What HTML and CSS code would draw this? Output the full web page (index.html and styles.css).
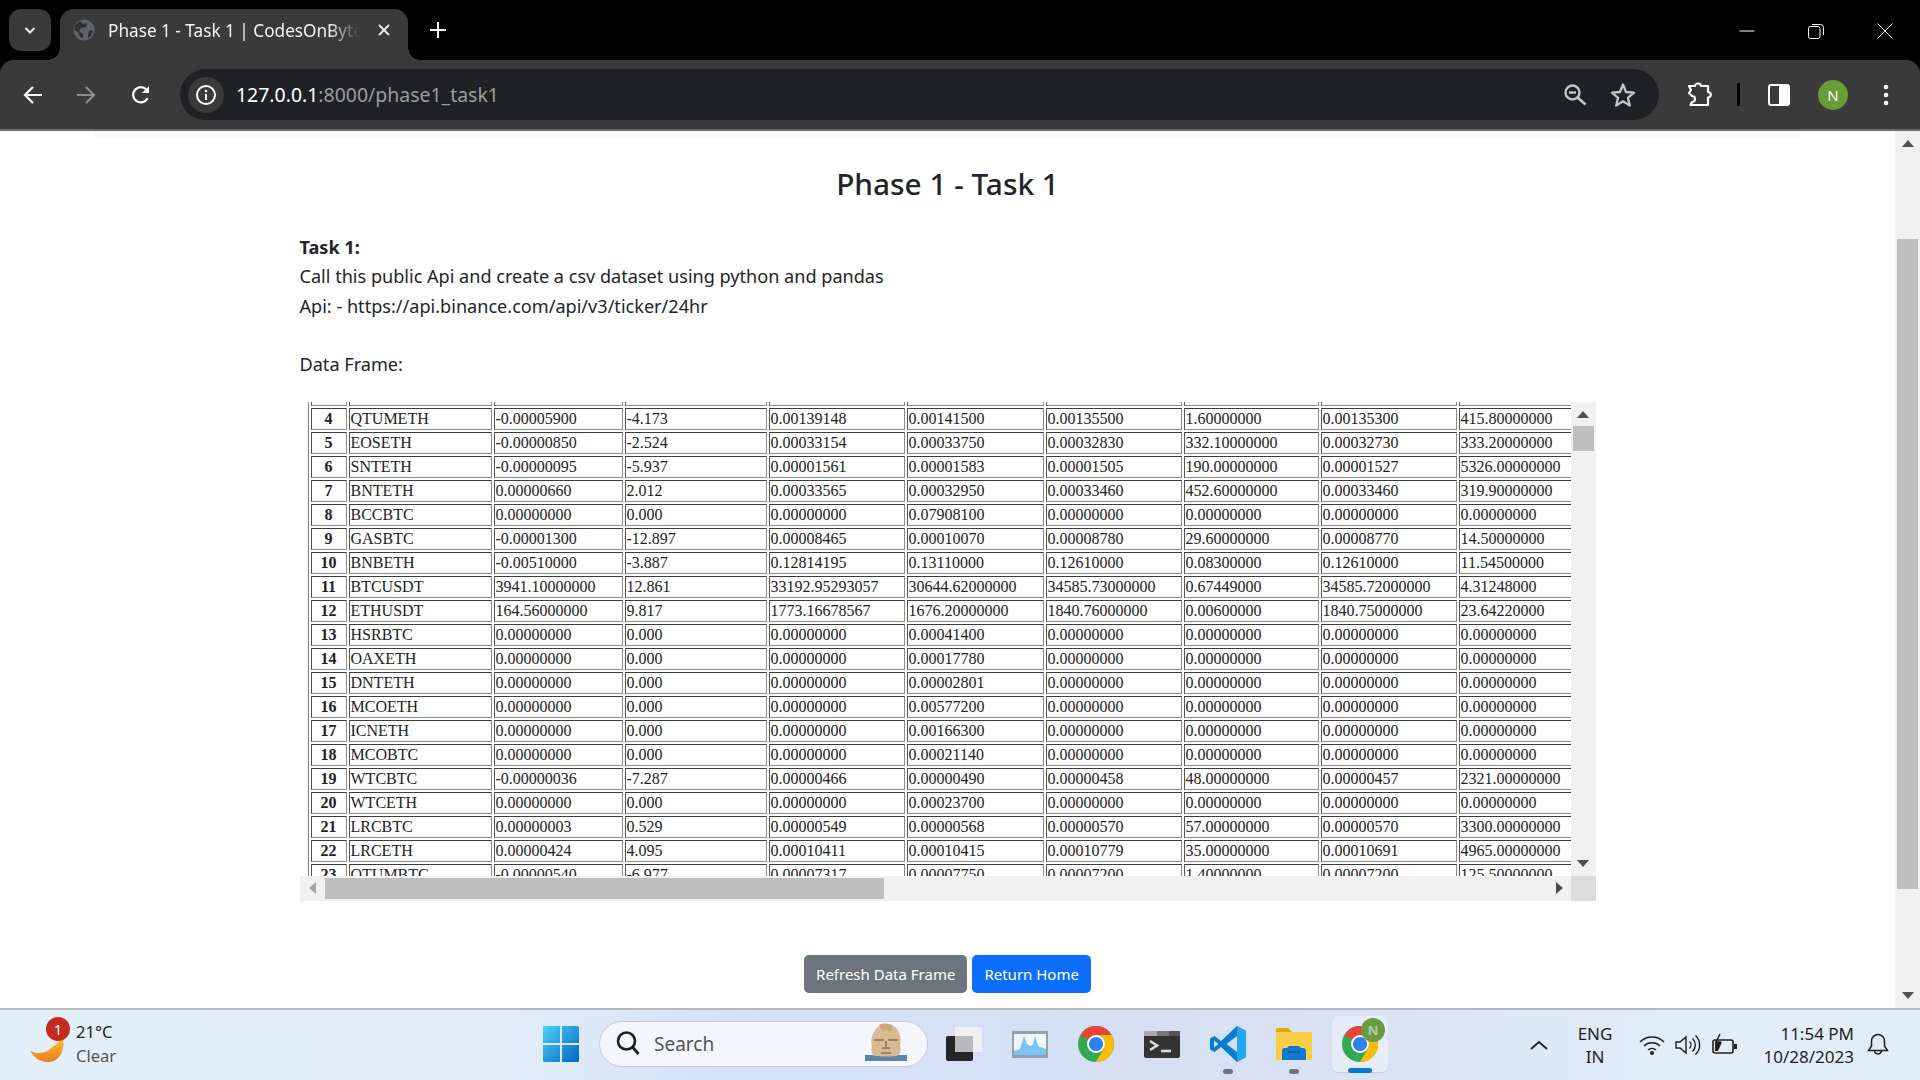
FILE: index.html
```html
<!DOCTYPE html>
<html lang="en">
<head>
<meta charset="utf-8">
<title>Phase 1 - Task 1 | CodesOnByte</title>
<link rel="stylesheet" href="styles.css">
</head>
<body>
<header class="browser">
  <div class="tabstrip">
    <button class="tab-search"><svg width="14" height="14" viewBox="0 0 14 14"><path d="M2.5 5l4.5 4.5L11.5 5" fill="none" stroke="#e8eaed" stroke-width="2"/></svg></button>
    <div class="tab">
      <svg class="favicon" width="22" height="22" viewBox="0 0 22 22"><circle cx="11" cy="11" r="10.5" fill="#5f6368"/><path d="M7 2l3 3 4-1-1 4-5 1-2 3 4 3v4l-3-1-2-5-4-2 1-5zM17 11l3 1-2 5-3 2 0-4z" fill="#303134"/></svg>
      <span class="tab-title">Phase 1 - Task 1 | CodesOnByte</span>
      <svg class="tab-close" width="14" height="14" viewBox="0 0 14 14"><path d="M2 2l10 10M12 2L2 12" stroke="#e8eaed" stroke-width="1.8"/></svg>
    </div>
    <svg class="new-tab" width="18" height="18" viewBox="0 0 18 18"><path d="M9 1v16M1 9h16" stroke="#fff" stroke-width="2"/></svg>
    <div class="window-controls">
      <svg width="16" height="16" viewBox="0 0 16 16"><path d="M0.500 8h15" stroke="#fff"/></svg>
      <svg width="16" height="16" viewBox="0 0 16 16"><rect x="0.500" y="3.500" width="11.500" height="12" rx="2" fill="none" stroke="#fff"/><path d="M4 1.500h8.500a3 3 0 0 1 3 3V12" fill="none" stroke="#fff"/></svg>
      <svg width="16" height="16" viewBox="0 0 16 16"><path d="M0.500 0.500l15 15M15.500 0.500l-15 15" stroke="#fff"/></svg>
    </div>
  </div>
  <div class="toolbar">
    <svg class="nav nav-back" width="20" height="20" viewBox="0 0 20 20"><path d="M19 10H2M10 2l-8 8 8 8" fill="none" stroke="#fff" stroke-width="2.200"/></svg>
    <svg class="nav nav-forward" width="20" height="20" viewBox="0 0 20 20"><path d="M1 10h17M10 2l8 8-8 8" fill="none" stroke="#8a8b8d" stroke-width="2.200"/></svg>
    <svg class="nav nav-reload" width="20" height="20" viewBox="0 0 20 20"><path d="M16.600 13.200A7.600 7.600 0 1 1 16 5.400" fill="none" stroke="#fff" stroke-width="2.200"/><path d="M18 1v7h-7z" fill="#fff"/></svg>
    <div class="omnibox">
      <span class="site-info"><svg width="22" height="22" viewBox="0 0 22 22"><circle cx="11" cy="11" r="9" fill="none" stroke="#fff" stroke-width="2"/><path d="M11 10v6" stroke="#fff" stroke-width="2"/><circle cx="11" cy="7" r="1.300" fill="#fff"/></svg></span>
      <span class="url"><span class="url-host">127.0.0.1</span>:8000/phase1_task1</span>
      <svg class="omni-zoom" width="24" height="24" viewBox="0 0 24 24"><circle cx="9.500" cy="9.500" r="7" fill="none" stroke="#c4c5c7" stroke-width="2.400"/><path d="M6 9.500h7" stroke="#c4c5c7" stroke-width="2.400"/><path d="M14.500 14.500l8 7" stroke="#c4c5c7" stroke-width="2.600"/></svg>
      <svg class="omni-star" width="26" height="26" viewBox="0 0 26 26"><path d="M13 2.500l3 7.500 8 .6-6.100 5.200 1.900 7.800L13 19.300 6.200 23.600l1.900-7.800L2 10.600l8-.6z" fill="none" stroke="#c4c5c7" stroke-width="2.300" stroke-linejoin="round"/></svg>
    </div>
    <svg class="tool-ext" width="26" height="26" viewBox="0 0 26 26"><path d="M3 4h6a3 2.500 0 0 1 6 0h7v6a2.500 2.500 0 0 1 0 5.500V23H4.500l1.500-3a3 3 0 0 0 0-6L3 11l2-3z" fill="none" stroke="#fff" stroke-width="2.200" stroke-linejoin="round"/></svg>
    <span class="tool-divider"></span>
    <svg class="tool-panel" width="22" height="22" viewBox="0 0 22 22"><rect x="1" y="1" width="20" height="20" rx="2" fill="none" stroke="#fff" stroke-width="2"/><rect x="11" y="1" width="10" height="20" rx="1.500" fill="#fff"/></svg>
    <span class="avatar">N</span>
    <svg class="tool-menu" width="6" height="22" viewBox="0 0 6 22"><circle cx="3" cy="3" r="2.300" fill="#fff"/><circle cx="3" cy="11" r="2.300" fill="#fff"/><circle cx="3" cy="19" r="2.300" fill="#fff"/></svg>
  </div>
</header>

<div class="viewport">
  <main class="page">
    <div class="nav-remnant"></div>
    <div class="container">
      <h3 class="title">Phase 1 - Task 1</h3>
      <p class="task"><strong>Task 1:</strong><br>Call this public Api and create a csv dataset using python and pandas<br>Api: - https://api.binance.com/api/v3/ticker/24hr</p>
      <p class="frame-label">Data Frame:</p>
      <div class="frame">
        <div class="frame-top">
          <div class="frame-view">
            <table class="data">
              <colgroup><col class="c-idx"><col class="c-sym"><col class="c-a"><col class="c-b"><col class="c-c"><col class="c-d"><col class="c-c"><col class="c-e"><col class="c-c"><col class="c-c"></colgroup>
              <tbody>
                <tr class="cut"><th></th><td></td><td></td><td></td><td></td><td></td><td></td><td></td><td></td><td></td></tr>
                <tr><th>4</th><td>QTUMETH</td><td>-0.00005900</td><td>-4.173</td><td>0.00139148</td><td>0.00141500</td><td>0.00135500</td><td>1.60000000</td><td>0.00135300</td><td>415.80000000</td></tr>
                <tr><th>5</th><td>EOSETH</td><td>-0.00000850</td><td>-2.524</td><td>0.00033154</td><td>0.00033750</td><td>0.00032830</td><td>332.10000000</td><td>0.00032730</td><td>333.20000000</td></tr>
                <tr><th>6</th><td>SNTETH</td><td>-0.00000095</td><td>-5.937</td><td>0.00001561</td><td>0.00001583</td><td>0.00001505</td><td>190.00000000</td><td>0.00001527</td><td>5326.00000000</td></tr>
                <tr><th>7</th><td>BNTETH</td><td>0.00000660</td><td>2.012</td><td>0.00033565</td><td>0.00032950</td><td>0.00033460</td><td>452.60000000</td><td>0.00033460</td><td>319.90000000</td></tr>
                <tr><th>8</th><td>BCCBTC</td><td>0.00000000</td><td>0.000</td><td>0.00000000</td><td>0.07908100</td><td>0.00000000</td><td>0.00000000</td><td>0.00000000</td><td>0.00000000</td></tr>
                <tr><th>9</th><td>GASBTC</td><td>-0.00001300</td><td>-12.897</td><td>0.00008465</td><td>0.00010070</td><td>0.00008780</td><td>29.60000000</td><td>0.00008770</td><td>14.50000000</td></tr>
                <tr><th>10</th><td>BNBETH</td><td>-0.00510000</td><td>-3.887</td><td>0.12814195</td><td>0.13110000</td><td>0.12610000</td><td>0.08300000</td><td>0.12610000</td><td>11.54500000</td></tr>
                <tr><th>11</th><td>BTCUSDT</td><td>3941.10000000</td><td>12.861</td><td>33192.95293057</td><td>30644.62000000</td><td>34585.73000000</td><td>0.67449000</td><td>34585.72000000</td><td>4.31248000</td></tr>
                <tr><th>12</th><td>ETHUSDT</td><td>164.56000000</td><td>9.817</td><td>1773.16678567</td><td>1676.20000000</td><td>1840.76000000</td><td>0.00600000</td><td>1840.75000000</td><td>23.64220000</td></tr>
                <tr><th>13</th><td>HSRBTC</td><td>0.00000000</td><td>0.000</td><td>0.00000000</td><td>0.00041400</td><td>0.00000000</td><td>0.00000000</td><td>0.00000000</td><td>0.00000000</td></tr>
                <tr><th>14</th><td>OAXETH</td><td>0.00000000</td><td>0.000</td><td>0.00000000</td><td>0.00017780</td><td>0.00000000</td><td>0.00000000</td><td>0.00000000</td><td>0.00000000</td></tr>
                <tr><th>15</th><td>DNTETH</td><td>0.00000000</td><td>0.000</td><td>0.00000000</td><td>0.00002801</td><td>0.00000000</td><td>0.00000000</td><td>0.00000000</td><td>0.00000000</td></tr>
                <tr><th>16</th><td>MCOETH</td><td>0.00000000</td><td>0.000</td><td>0.00000000</td><td>0.00577200</td><td>0.00000000</td><td>0.00000000</td><td>0.00000000</td><td>0.00000000</td></tr>
                <tr><th>17</th><td>ICNETH</td><td>0.00000000</td><td>0.000</td><td>0.00000000</td><td>0.00166300</td><td>0.00000000</td><td>0.00000000</td><td>0.00000000</td><td>0.00000000</td></tr>
                <tr><th>18</th><td>MCOBTC</td><td>0.00000000</td><td>0.000</td><td>0.00000000</td><td>0.00021140</td><td>0.00000000</td><td>0.00000000</td><td>0.00000000</td><td>0.00000000</td></tr>
                <tr><th>19</th><td>WTCBTC</td><td>-0.00000036</td><td>-7.287</td><td>0.00000466</td><td>0.00000490</td><td>0.00000458</td><td>48.00000000</td><td>0.00000457</td><td>2321.00000000</td></tr>
                <tr><th>20</th><td>WTCETH</td><td>0.00000000</td><td>0.000</td><td>0.00000000</td><td>0.00023700</td><td>0.00000000</td><td>0.00000000</td><td>0.00000000</td><td>0.00000000</td></tr>
                <tr><th>21</th><td>LRCBTC</td><td>0.00000003</td><td>0.529</td><td>0.00000549</td><td>0.00000568</td><td>0.00000570</td><td>57.00000000</td><td>0.00000570</td><td>3300.00000000</td></tr>
                <tr><th>22</th><td>LRCETH</td><td>0.00000424</td><td>4.095</td><td>0.00010411</td><td>0.00010415</td><td>0.00010779</td><td>35.00000000</td><td>0.00010691</td><td>4965.00000000</td></tr>
                <tr><th>23</th><td>QTUMBTC</td><td>-0.00000540</td><td>-6.977</td><td>0.00007317</td><td>0.00007750</td><td>0.00007200</td><td>1.40000000</td><td>0.00007200</td><td>125.50000000</td></tr>
              </tbody>
            </table>
          </div>
          <div class="sb-v sb-inner">
            <span class="arrow arrow-up"></span>
            <span class="sb-thumb-v inner-thumb-v"></span>
            <span class="arrow arrow-down"></span>
          </div>
        </div>
        <div class="sb-h">
          <span class="arrow arrow-left"></span>
          <span class="sb-thumb-h"></span>
          <span class="arrow arrow-right"></span>
          <span class="sb-corner"></span>
        </div>
      </div>
      <div class="actions">
        <a class="btn btn-grey">Refresh Data Frame</a>
        <a class="btn btn-blue">Return Home</a>
      </div>
    </div>
  </main>
  <div class="sb-v sb-page">
    <span class="arrow arrow-up"></span>
    <span class="sb-thumb-v page-thumb"></span>
    <span class="arrow arrow-down"></span>
  </div>
</div>

<footer class="taskbar">
  <div class="weather">
    <div class="weather-icon">
      <svg width="40" height="40" viewBox="0 0 40 40"><defs><linearGradient id="moon" x1="0" y1="0" x2="0" y2="1"><stop offset="0" stop-color="#f6c02c"/><stop offset="1" stop-color="#ee7d1c"/></linearGradient></defs><path d="M34 8c2 12-3 24-15 24C11 32 5.500 28 1 21c7 3 15 3 20-2 4-3 8-6 13-11z" fill="url(#moon)"/></svg>
      <span class="badge">1</span>
    </div>
    <div class="weather-text"><span class="temp">21°C</span><span class="cond">Clear</span></div>
  </div>
  <div class="tasks">
    <div class="tile tile-start"><svg width="36" height="36" viewBox="0 0 36 36"><defs><linearGradient id="w1" x1="0" y1="0" x2="1" y2="1"><stop offset="0" stop-color="#4fd0fb"/><stop offset="1" stop-color="#0067c0"/></linearGradient></defs><path d="M0 1.500A1.500 1.500 0 0 1 1.500 0H17v17H0zM19 0h15.500A1.500 1.500 0 0 1 36 1.500V17H19zM0 19h17v17H1.500A1.500 1.500 0 0 1 0 34.500zM19 19h17v15.500a1.500 1.500 0 0 1-1.500 1.500H19z" fill="url(#w1)"/></svg></div>
    <div class="search">
      <svg width="26" height="26" viewBox="0 0 26 26"><circle cx="11.500" cy="11" r="8.500" fill="none" stroke="#1f1f1f" stroke-width="2.600"/><path d="M17.500 17l6 7" stroke="#1f1f1f" stroke-width="2.800"/></svg>
      <span class="search-label">Search</span>
      <svg class="search-art" width="42" height="40" viewBox="0 0 42 40"><rect x="0" y="32" width="42" height="6" fill="#5d84ad"/><path d="M8 32c-2-3-2-6-1-9-1-4-1-9 2-14C12 3 17 1 21 1s10 2 13 8c2 5 2 10 1 14 1 3 1 6-1 9-4 2-22 2-26 0z" fill="#d8bb93"/><path d="M14 2c4-2 10-2 14 1l-3 6-4-3-3 3z" fill="#c9a87f"/><path d="M9 17h10M23 17h10M17 25h8M16 30h10M21 18v6" stroke="#8d6f4e" stroke-width="1.500" fill="none"/></svg>
    </div>
    <div class="tile tile-first"><svg width="36" height="34" viewBox="0 0 36 34"><rect x="0" y="9" width="27" height="25" rx="2" fill="#262626"/><rect x="9" y="0" width="27" height="25" rx="1" fill="#f0f0f2"/><rect x="9" y="9" width="18" height="16" fill="#b9b9bb"/></svg></div>
    <div class="tile"><svg width="36" height="27" viewBox="0 0 36 27"><rect width="36" height="27" rx="1" fill="#93a0ac"/><rect x="2" y="3" width="32" height="21" fill="#eef5fb"/><path d="M2 20l6-2 4-13 3 8 3 2 3-1 2-9 3 10 8 3v6H2z" fill="#79c4f3"/></svg></div>
    <div class="tile"><svg width="36" height="36" viewBox="0 0 48 48"><circle cx="24" cy="24" r="24" fill="#34a853"/><path d="M24 0a24 24 0 0 1 20.800 12H24a12 12 0 0 0-10.400 6L3.200 12A24 24 0 0 1 24 0z" fill="#ea4335"/><path d="M44.800 12A24 24 0 0 1 24 48l10.400-18a12 12 0 0 0-10.400-18z" fill="#fbbc04"/><circle cx="24" cy="24" r="12" fill="#fff"/><circle cx="24" cy="24" r="9.500" fill="#2f7fed"/></svg></div>
    <div class="tile"><svg width="36" height="27" viewBox="0 0 36 27"><rect width="36" height="27" rx="2" fill="#333"/><rect width="13" height="5" fill="#aaa"/><rect x="13" width="12" height="5" fill="#777"/><rect x="25" width="11" height="5" fill="#555"/><path d="M6 10l7 4.500-7 4.500" fill="none" stroke="#ddd" stroke-width="2.600"/><path d="M17 20h10" stroke="#ddd" stroke-width="2.600"/></svg></div>
    <div class="tile tile-running"><svg width="36" height="36" viewBox="0 0 36 36"><path d="M27 0L11 15 4.500 10 0 12.500v11L4.500 26l6.500-5 16 15 9-5V5z" fill="#0a7cd0"/><path d="M27 0l9 5v26l-9 5z" fill="#22a8f2"/><path d="M27 10v16l-10.500-8zM4 14.500v7l4.500-3.500z" fill="#d6dff2"/></svg></div>
    <div class="tile tile-running"><svg width="36" height="32" viewBox="0 0 36 32"><path d="M0 2a2 2 0 0 1 2-2h10l4 4h18a2 2 0 0 1 2 2v4H0z" fill="#e3a40c"/><rect y="4" width="36" height="28" fill="#fdcf48"/><path d="M6 23a3 3 0 0 1 3-3h2l2-2h10l2 2h2a3 3 0 0 1 3 3v9H6z" fill="#0d78d0"/><path d="M12 24h12" stroke="#0a4f8f" stroke-width="1.500"/></svg></div>
    <div class="tile tile-active">
      <svg width="36" height="36" viewBox="0 0 48 48"><circle cx="24" cy="24" r="24" fill="#34a853"/><path d="M24 0a24 24 0 0 1 20.800 12H24a12 12 0 0 0-10.400 6L3.200 12A24 24 0 0 1 24 0z" fill="#ea4335"/><path d="M44.800 12A24 24 0 0 1 24 48l10.400-18a12 12 0 0 0-10.400-18z" fill="#fbbc04"/><circle cx="24" cy="24" r="12" fill="#fff"/><circle cx="24" cy="24" r="9.500" fill="#2f7fed"/></svg>
      <span class="tile-badge">N</span>
    </div>
  </div>
  <div class="tray">
    <svg class="tray-chevron" width="18" height="10" viewBox="0 0 18 10"><path d="M1 9l8-7 8 7" fill="none" stroke="#222" stroke-width="1.800"/></svg>
    <div class="lang"><span>ENG</span><span>IN</span></div>
    <svg class="tray-wifi" width="26" height="22" viewBox="0 0 26 22"><path d="M1 8a17 17 0 0 1 24 0M5 12a11.500 11.500 0 0 1 16 0M9 16a6 6 0 0 1 8 0" fill="none" stroke="#1f1f1f" stroke-width="1.500"/><circle cx="13" cy="19" r="2" fill="#1f1f1f"/></svg>
    <svg class="tray-vol" width="26" height="22" viewBox="0 0 26 22"><path d="M1 8h4l6-5v16l-6-5H1zM14.500 7.500a5 5 0 0 1 0 7M17.500 4.500a9 9 0 0 1 0 13M20.500 1.500a13 13 0 0 1 0 19" fill="none" stroke="#1f1f1f" stroke-width="1.400"/></svg>
    <svg class="tray-batt" width="26" height="24" viewBox="0 0 26 24"><rect x="1" y="7" width="20" height="13" rx="2" fill="none" stroke="#1f1f1f" stroke-width="1.600"/><path d="M3 18V9h7l-4 9z" fill="#1f1f1f"/><path d="M22 11h3v5h-3z" fill="#1f1f1f"/><path d="M8 1l-4 8h4l-2 6" fill="none" stroke="#1f1f1f" stroke-width="1.500"/></svg>
    <div class="clock"><span>11:54 PM</span><span>10/28/2023</span></div>
    <svg class="tray-bell" width="22" height="24" viewBox="0 0 22 24"><path d="M11 1.500a6.500 6.500 0 0 1 6.500 6.500v5l3 4.500h-19l3-4.500V8A6.500 6.500 0 0 1 11 1.500zM7.500 17.500a3.500 3.500 0 0 0 7 0" fill="none" stroke="#1f1f1f" stroke-width="1.500"/></svg>
  </div>
</footer>
</body>
</html>
```
FILE: styles.css
```css
* { box-sizing: border-box; }
html, body { margin: 0; height: 100%; }
body {
  width: 1920px;
  height: 1080px;
  overflow: hidden;
  display: flex;
  flex-direction: column;
  font-family: "Noto Sans", "Open Sans", sans-serif;
  background: #fff;
  color: #212529;
}

/* Browser chrome */
.browser { flex: none; background: #000; }
.tabstrip {
  height: 60px;
  display: flex;
  align-items: flex-end;
  padding-left: 9px;
}
.tab-search {
  width: 42px;
  height: 42px;
  margin-bottom: 9px;
  border: 0;
  padding: 0;
  border-radius: 12px;
  background: #3a3a3a;
  display: flex;
  align-items: center;
  justify-content: center;
}
.tab {
  position: relative;
  width: 348px;
  height: 51px;
  margin-left: 9px;
  background: #3a3a3a;
  border-radius: 14px 14px 0 0;
  display: flex;
  align-items: center;
  padding: 0 0 9px 13px;
}
.tab::before, .tab::after {
  content: "";
  position: absolute;
  bottom: 0;
  width: 12px;
  height: 12px;
}
.tab::before { left: -12px; background: radial-gradient(circle at 0 0, #000 11.500px, #3a3a3a 12px); }
.tab::after { right: -12px; background: radial-gradient(circle at 100% 0, #000 11.500px, #3a3a3a 12px); }
.favicon { flex: none; }
.tab-title {
  margin-left: 13px;
  width: 251px;
  flex: none;
  overflow: hidden;
  white-space: nowrap;
  font-size: 17.200px;
  color: #f1f3f4;
  -webkit-mask-image: linear-gradient(to right, #000 88%, transparent 100%);
  mask-image: linear-gradient(to right, #000 88%, transparent 100%);
}
.tab-close { margin-left: 18px; flex: none; }
.new-tab { margin: 0 0 21px 21px; }
.window-controls {
  margin-left: auto;
  margin-bottom: 21px;
  padding-right: 27px;
  display: flex;
  gap: 53px;
}
.toolbar {
  height: 71px;
  background: #3a3a3a;
  border-radius: 14px 14px 0 0;
  border-bottom: 2px solid #6c6c6c;
  display: flex;
  align-items: center;
  padding-left: 23px;
}
.nav { flex: none; }
.nav-forward { margin-left: 33px; }
.nav-reload { margin-left: 35px; }
.omnibox {
  width: 1479px;
  height: 51px;
  margin-left: 29px;
  background: #202124;
  border-radius: 26px;
  display: flex;
  align-items: center;
  padding: 0 23px 0 8px;
}
.site-info {
  width: 36px;
  height: 36px;
  border-radius: 50%;
  background: #3a3a3a;
  display: flex;
  align-items: center;
  justify-content: center;
}
.url { margin-left: 12px; font-size: 19.450px; color: #9b9c9e; white-space: nowrap; }
.url-host { color: #fff; }
.omni-zoom { margin-left: auto; }
.omni-star { margin-left: 23px; }
.tool-ext { margin-left: 27px; }
.tool-divider { width: 3px; height: 23px; margin-left: 25px; background: #000; }
.tool-panel { margin-left: 28px; }
.avatar {
  width: 30px;
  height: 30px;
  margin-left: 28px;
  border-radius: 50%;
  background: #669d34;
  color: #fff;
  font-size: 15px;
  display: flex;
  align-items: center;
  justify-content: center;
}
.tool-menu { margin-left: 35px; }

/* Viewport */
.viewport { flex: 1; min-height: 0; display: flex; }
.page { flex: 1; min-width: 0; overflow: hidden; }
.nav-remnant { height: 8px; margin: 0 95px; background: #f8f9fa; }
.container { width: 1296px; margin: 0 auto; }
.title {
  margin: 24px 0 29px;
  text-align: center;
  font-size: 29.800px;
  font-weight: 500;
  line-height: 41px;
}
.task, .frame-label { font-size: 18.100px; line-height: 29.400px; margin: 0; }
.task strong { font-weight: 700; }
.frame-label { margin-top: 29px; }

.frame { margin-top: 22px; width: 1296px; height: 499px; display: flex; flex-direction: column; }
.frame-top { flex: 1; min-height: 0; display: flex; }
.frame-view { width: 1271px; overflow: hidden; padding-left: 8px; }
.data {
  table-layout: fixed;
  width: 1290px;
  margin-top: -21px;
  border-collapse: separate;
  border-spacing: 2px;
  border: 1px solid #808080;
  font-family: "Liberation Serif", serif;
  font-size: 16px;
  color: #222;
}
.data th, .data td {
  height: 22px;
  padding: 0 1px;
  line-height: 18px;
  border: 1px solid;
  border-color: #3c3c3c #8a8a8a #8a8a8a #555;
  white-space: nowrap;
  overflow: hidden;
}
.data th { text-align: center; font-weight: 700; }
.c-idx { width: 36px; }
.c-sym { width: 143px; }
.c-a { width: 129px; }
.c-b { width: 142px; }
.c-c { width: 136px; }
.c-d { width: 137px; }
.c-e { width: 135px; }

.sb-v {
  flex: none;
  width: 25px;
  background: #f1f1f1;
  display: flex;
  flex-direction: column;
  align-items: center;
  position: relative;
}
.arrow { display: block; width: 0; height: 0; border-style: solid; border-color: transparent; }
.arrow-up { border-width: 0 6px 7px; border-bottom-color: #505050; }
.arrow-down { border-width: 7px 6px 0; border-top-color: #505050; }
.arrow-left { border-width: 6px 7px 6px 0; border-right-color: #a3a3a3; }
.arrow-right { border-width: 6px 0 6px 7px; border-left-color: #505050; }
.sb-v .arrow-up { margin-top: 9px; }
.sb-v .arrow-down { margin-top: auto; margin-bottom: 9px; }
.sb-thumb-v { width: 21px; background: #bebebe; }
.inner-thumb-v { height: 25px; margin-top: 8px; }
.page-thumb { height: 650px; margin-top: 92px; }
.sb-h {
  flex: none;
  height: 25px;
  background: #f1f1f1;
  display: flex;
  align-items: center;
  padding-left: 9px;
}
.sb-thumb-h { width: 559px; height: 21px; margin-left: 9px; background: #bebebe; }
.sb-h .arrow-right { margin-left: auto; margin-right: 8px; }
.sb-corner { width: 25px; height: 25px; background: #dcdcdc; }

.actions { margin-top: 54px; display: flex; justify-content: center; gap: 5px; }
.btn {
  height: 38px;
  padding: 0 12px;
  border-radius: 5px;
  color: #fff;
  font-size: 15px;
  display: flex;
  align-items: center;
}
.btn-grey { background: #6c757d; }
.btn-blue { background: #0d6efd; }

/* Taskbar */
.taskbar {
  flex: none;
  height: 72px;
  border-top: 2px solid #b4b8c0;
  background: linear-gradient(90deg, #e2eef8 0, #e3eef8 25%, #d5e2f8 38%, #d6dff2 60%, #dbe5f4 75%, #e1edf7 88%, #e1edf7 100%);
  display: flex;
  padding-top: 6px;
  color: #1f1f1f;
}
.weather { width: 533px; flex: none; display: flex; align-items: flex-start; padding-left: 29px; }
.weather-icon { position: relative; width: 47px; height: 48px; padding-top: 14px; }
.badge {
  position: absolute;
  left: 17px;
  top: 1px;
  width: 24px;
  height: 24px;
  border-radius: 50%;
  background: #c42b1c;
  color: #fff;
  font-size: 15px;
  display: flex;
  align-items: center;
  justify-content: center;
}
.weather-text { display: flex; flex-direction: column; font-size: 16.500px; line-height: 24px; padding-top: 4px; }
.cond { color: #555; }
.tasks { display: flex; align-items: stretch; height: 56px; gap: 10px; }
.tile {
  position: relative;
  width: 56px;
  height: 56px;
  border-radius: 6px;
  display: flex;
  align-items: center;
  justify-content: center;
}
.tile-running::after, .tile-active::after {
  content: "";
  position: absolute;
  bottom: -2px;
  left: 50%;
  width: 10px;
  height: 5px;
  margin-left: -5px;
  border-radius: 3px;
  background: #6b7480;
}
.tile-active { background: #e6ecf8; box-shadow: 0 1px 1px #c7cfdd; }
.tile-active::after { width: 24px; margin-left: -12px; background: #0078d4; bottom: -1px; }
.tile-badge {
  position: absolute;
  left: 29px;
  top: 2px;
  width: 24px;
  height: 24px;
  border-radius: 50%;
  background: #6a9a44;
  color: #b6d09c;
  font-size: 13px;
  font-weight: 700;
  display: flex;
  align-items: center;
  justify-content: center;
}
.search {
  width: 329px;
  height: 46px;
  margin: 5px 0 0;
  border-radius: 23px;
  background: #f3f6fd;
  border: 1px solid #c5cede;
  display: flex;
  align-items: flex-end;
  padding: 0 20px 3px 15px;
}
.search > svg:first-child { align-self: center; }
.search-label { align-self: center; margin: 2px 0 0 13px; font-size: 19px; color: #555; }
.search-art { margin-left: auto; }
.tile-first { margin-left: -2px; }
.tray { margin-left: auto; display: flex; align-items: center; height: 57px; padding-right: 31px; }
.tray-chevron { margin-right: 20px; }
.lang { width: 54px; display: flex; flex-direction: column; align-items: center; font-size: 17px; line-height: 23px; }
.tray-wifi { margin-left: 17px; }
.tray-vol { margin-left: 10px; }
.tray-batt { margin-left: 11px; }
.clock { width: 112px; margin-left: 4px; display: flex; flex-direction: column; align-items: flex-end; font-size: 17px; line-height: 23px; }
.tray-bell { margin-left: 13px; }
```
